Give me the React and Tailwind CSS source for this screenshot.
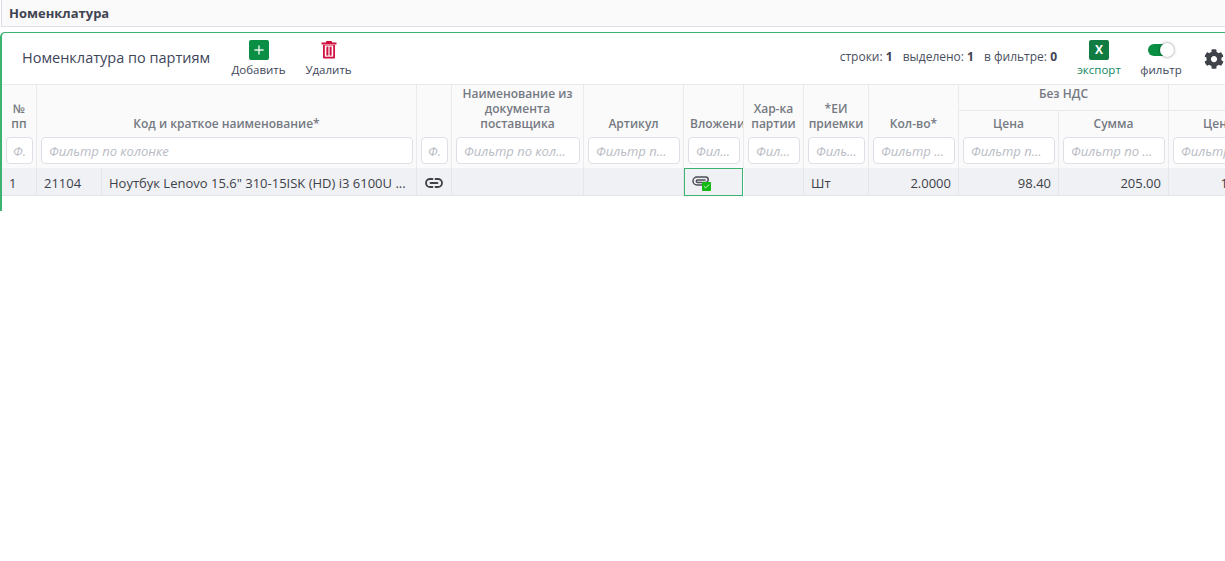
import { FaCog } from 'react-icons/fa';
import { Check, Plus } from 'lucide-react';

const FONT = "font-['Open_Sans','Noto_Sans',sans-serif]";

// Столбцы таблицы: ширины заданы в сетке
const headers = [
    { label: <>№<br />пп</>, span: 'col-span-1' },
    { label: 'Код и краткое наименование*', span: 'col-span-2' },
    { label: '', span: 'col-span-1' },
    { label: <>Наименование из<br />документа<br />поставщика</>, span: 'col-span-1' },
    { label: 'Артикул', span: 'col-span-1' },
    { label: 'Вложения', span: 'col-span-1', extra: '!justify-start pl-[6px]' },
    { label: <>Хар-ка<br />партии</>, span: 'col-span-1' },
    { label: <>*ЕИ<br />приемки</>, span: 'col-span-1' },
    { label: 'Кол-во*', span: 'col-span-1' },
];

const FilterCell = ({ text, center }) => (
    <div className="h-[31px] border-r border-[#e9e9ee] bg-[#fafafb] pl-[4px] pr-[3px] min-w-0">
        <div className={`h-[27px] pt-[2px] bg-white border border-[#dfdfe8] rounded-[4px] flex items-center italic text-[13px] text-[#b9bcc4] whitespace-nowrap overflow-hidden ${center ? 'justify-center' : 'pl-[7px]'}`}>
            {text}
        </div>
    </div>
);

const HeadCell = ({ children, span, extra = '' }) => (
    <div className={`${span} ${extra} border-r border-[#e9e9ee] bg-[#fafafb] flex items-end justify-center text-center pb-[6px] text-[12px] leading-[15px] font-semibold text-[#757981] overflow-hidden whitespace-nowrap`}>
        <div>{children}</div>
    </div>
);

const RowCell = ({ children, className = '' }) => (
    <div className={`h-[28px] pt-[5px] bg-[#f0f1f4] border-r border-b border-[#e5e6eb] flex items-center text-[13px] text-[#3d4149] whitespace-nowrap overflow-hidden ${className}`}>
        {children}
    </div>
);

const TrashIcon = () => (
    <svg width="16" height="19" viewBox="0 0 16 19" fill="none">
        <path d="M5.5 1h5l.8 1.6H15.5v1.8H.5V2.6h4.2z" fill="#d0103f" />
        <path d="M2 5h12v12.5a1 1 0 0 1-1 1H3a1 1 0 0 1-1-1z" fill="#d0103f" />
        <rect x="3.8" y="5.5" width="8.4" height="11.2" fill="#fff" />
        <rect x="5.4" y="6.6" width="2" height="9" fill="#d0103f" />
        <rect x="8.6" y="6.6" width="2" height="9" fill="#d0103f" />
    </svg>
);

const LinkIcon = () => (
    <svg width="18" height="10" viewBox="0 0 18 10" fill="none" stroke="#3f4249" strokeWidth="1.8" strokeLinecap="round">
        <path d="M7.5 1H5a4 4 0 0 0 0 8h2.5" />
        <path d="M10.5 1H13a4 4 0 0 1 0 8h-2.5" />
        <path d="M5.5 5h7" />
    </svg>
);

const ClipIcon = () => (
    <svg width="18" height="11" viewBox="0 0 18 11" fill="none" stroke="#4b4e56" strokeWidth="1.5" strokeLinecap="round">
        <path d="M16.5 9H5a4 4 0 0 1 0-8h8.5a2.7 2.7 0 0 1 0 5.4H5.5a1.2 1.2 0 0 1 0-2.4H13" />
    </svg>
);

export default function App() {
    return (
        <div className={`${FONT} w-[1225px] h-[561px] bg-white overflow-hidden`}>
            {/* Заголовок страницы */}
            <div className="h-[27px] pt-[2px] ml-px bg-[#fafafb] border-l border-b border-[#dfdfe8] pl-[7px] flex items-center text-[13px] font-bold text-[#3f4450]">
                Номенклатура
            </div>

            {/* Панель */}
            <div className="mt-[5px] h-[179px] border-t border-l-2 border-[#3cb371] rounded-tl-[5px] overflow-hidden">
                <div className="h-[52px] flex items-center border-b border-[#e9e9ee]">
                    <div className="pl-[20px] w-[229px] text-[14.5px] leading-[20px] text-[#40465a] whitespace-nowrap -mt-[1px]">Номенклатура по партиям</div>
                    <div className="w-[55px] flex flex-col items-center mt-[1px]">
                        <div className="w-[20px] h-[20px] rounded-[2px] bg-[#0b8f45] flex items-center justify-center">
                            <Plus size={14} strokeWidth={2.4} color="#e8f5ec" />
                        </div>
                        <div className="text-[11.5px] leading-[16px] mt-[2px] text-[#40465a] whitespace-nowrap">Добавить</div>
                    </div>
                    <div className="ml-[19px] w-[47px] flex flex-col items-center mt-[1px]">
                        <TrashIcon />
                        <div className="text-[11.5px] leading-[16px] mt-[3px] text-[#40465a] whitespace-nowrap">Удалить</div>
                    </div>

                    <div className="ml-auto flex items-center mr-[20px] text-[12px] text-[#4a4f60] gap-[10px] -mt-[3px] whitespace-nowrap">
                        <span>строки: <b className="font-bold text-[#3f4450]">1</b></span>
                        <span>выделено: <b className="font-bold text-[#3f4450]">1</b></span>
                        <span>в фильтре: <b className="font-bold text-[#3f4450]">0</b></span>
                    </div>
                    <div className="w-[44px] flex flex-col items-center mr-[19px] mt-[1px]">
                        <div className="w-[20px] h-[20px] rounded-[2px] bg-[#107c41] flex items-center justify-center text-white text-[12px] font-bold leading-none">X</div>
                        <div className="text-[11.5px] leading-[16px] mt-[2px] text-[#0f8a5f]">экспорт</div>
                    </div>
                    <div className="w-[42px] flex flex-col items-center mr-[22px] mt-[1px]">
                        <div className="relative w-[26px] h-[20px] flex items-center">
                            <div className="w-[24px] h-[12px] rounded-full bg-[#0b8f45]" />
                            <div className="absolute right-0 top-[3px] w-[14px] h-[14px] rounded-full bg-white shadow-[0_0_3px_rgba(0,0,0,0.5)]" />
                        </div>
                        <div className="text-[11.5px] leading-[16px] mt-[2px] text-[#40465a]">фильтр</div>
                    </div>
                    <FaCog size={20} color="#3f4249" className="shrink-0 mr-[1px]" />
                </div>

                {/* Таблица */}
                <div className="grid grid-cols-[35px_65px_315px_35px_132px_100px_60px_60px_65px_90px_100px_110px_100px] grid-rows-[26px_26px_31px_28px] w-[1267px]">
                    {headers.map((h, i) => (
                        <HeadCell key={i} span={`${h.span} row-span-2`} extra={h.extra}>{h.label}</HeadCell>
                    ))}
                    <div className="col-span-2 bg-[#fafafb] border-r border-b border-[#e9e9ee] flex items-center justify-center pb-[8px] text-[12px] font-semibold text-[#757981]">Без НДС</div>
                    <div className="bg-[#fafafb] border-b border-[#e9e9ee]" />
                    <HeadCell span="col-span-1">Цена</HeadCell>
                    <HeadCell span="col-span-1">Сумма</HeadCell>
                    <HeadCell span="col-span-1">Цена</HeadCell>

                    <FilterCell text="Ф." center />
                    <div className="col-span-2"><FilterCell text="Фильтр по колонке" /></div>
                    <FilterCell text="Ф." center />
                    <FilterCell text="Фильтр по кол..." />
                    <FilterCell text="Фильтр п..." />
                    <FilterCell text="Фил..." />
                    <FilterCell text="Фил..." />
                    <FilterCell text="Филь..." />
                    <FilterCell text="Фильтр ..." />
                    <FilterCell text="Фильтр п..." />
                    <FilterCell text="Фильтр по ..." />
                    <FilterCell text="Фильтр п..." />

                    <RowCell className="pl-[7px]">1</RowCell>
                    <RowCell className="pl-[7px]">21104</RowCell>
                    <RowCell className="pl-[7px]">Ноутбук Lenovo 15.6" 310-15ISK (HD) i3 6100U ...</RowCell>
                    <RowCell className="justify-center !pt-[3px]"><LinkIcon /></RowCell>
                    <RowCell />
                    <RowCell />
                    <RowCell className="!border !border-[#3cb371] !pt-[1px] pl-[7px] w-[59px]">
                        <div className="relative -mt-[2px]">
                            <ClipIcon />
                            <div className="absolute left-[10px] top-[6px] w-[9px] h-[9px] rounded-[1px] bg-[#12b812] flex items-center justify-center">
                                <Check size={7} strokeWidth={3} color="#e6ffe6" />
                            </div>
                        </div>
                    </RowCell>
                    <RowCell />
                    <RowCell className="pl-[7px]">Шт</RowCell>
                    <RowCell className="justify-end pr-[7px]">2.0000</RowCell>
                    <RowCell className="justify-end pr-[7px]">98.40</RowCell>
                    <RowCell className="justify-end pr-[7px]">205.00</RowCell>
                    <RowCell className="justify-end pr-[7px]">105.00</RowCell>
                </div>
            </div>
        </div>
    );
}
